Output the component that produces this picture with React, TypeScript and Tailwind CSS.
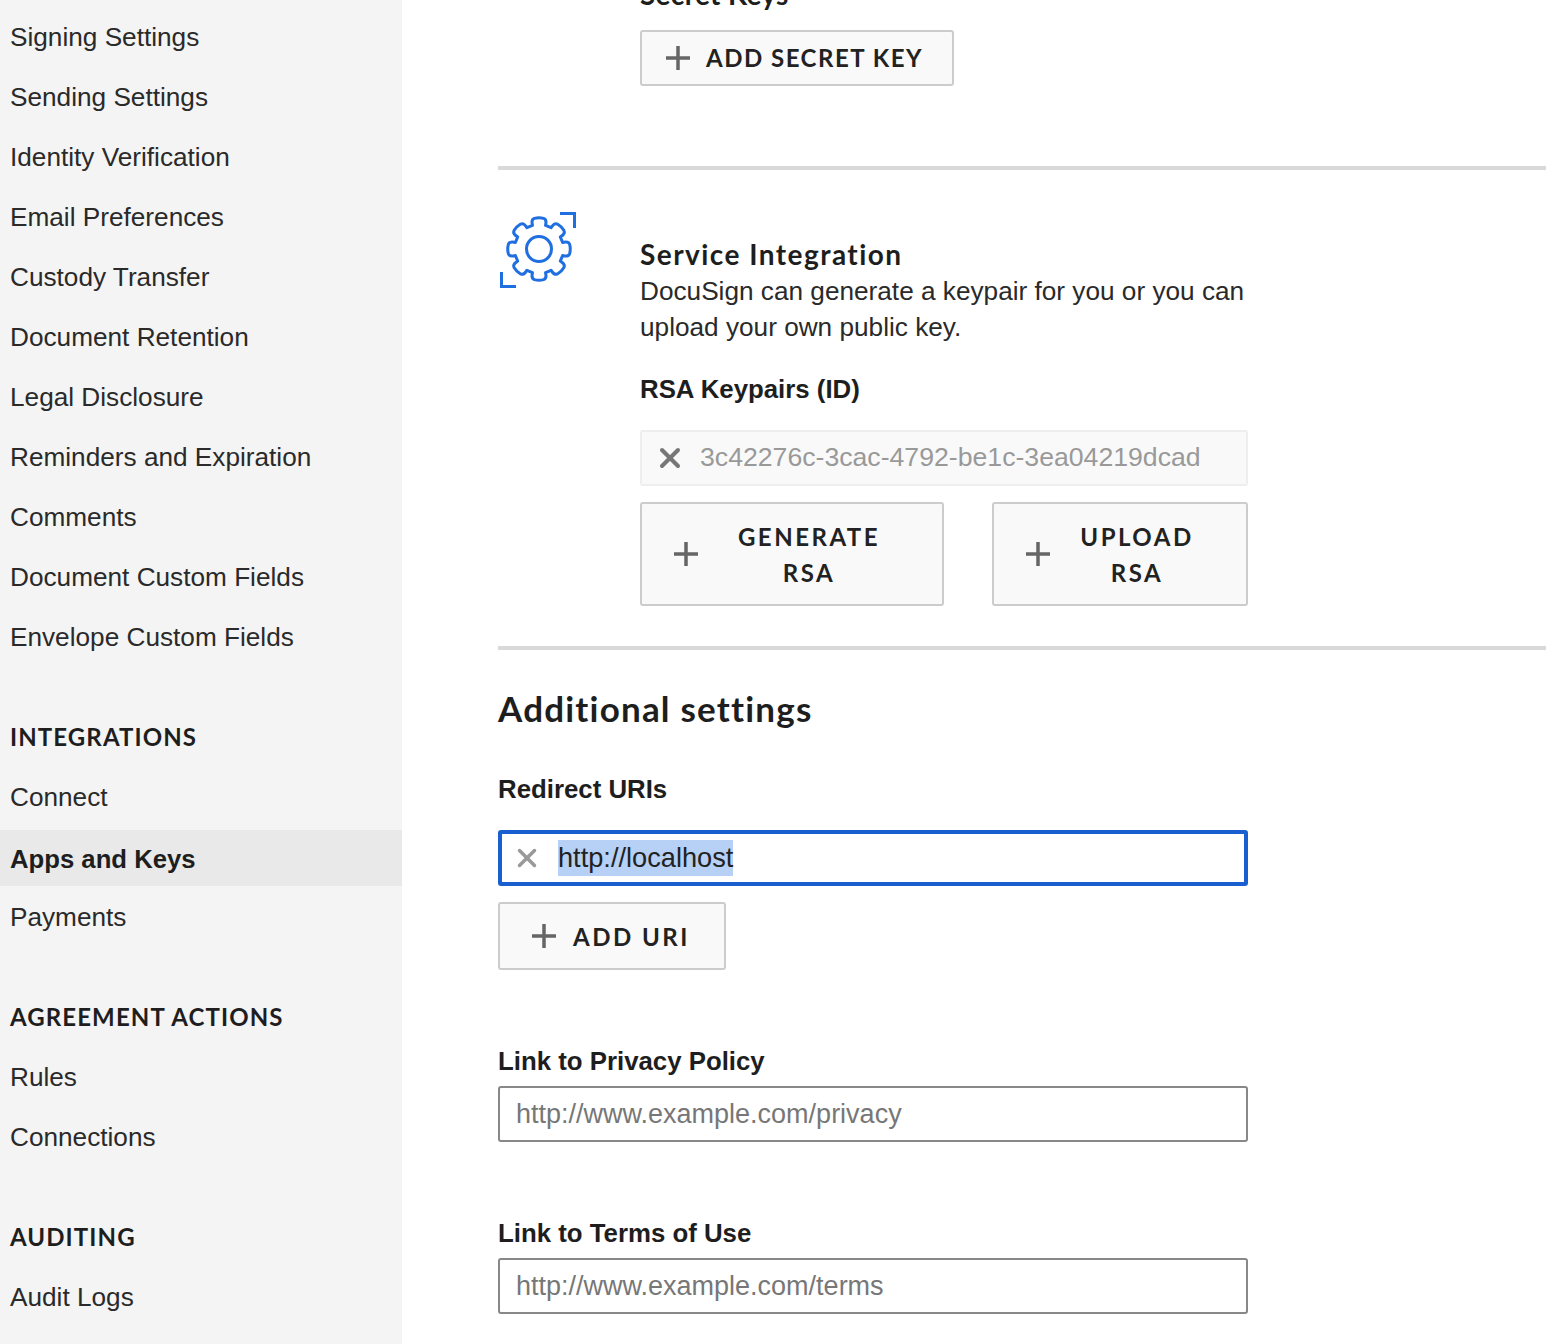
import {X} from "lucide-react";

const BODY = "font-['Liberation_Sans',Arial,sans-serif]";
const HEAD = "font-['Lato','Noto_Sans',sans-serif]";

const gearPath = () => {
    const cx = 39;
    const cy = 37;
    const pts: string[] = [];
    for (let i = 0; i < 8; i++) {
        const a = (i * Math.PI) / 4 - Math.PI / 2;
        const p = (r: number, d: number) => `${(cx + r * Math.cos(a + d)).toFixed(2)} ${(cy + r * Math.sin(a + d)).toFixed(2)}`;
        pts.push(`${i === 0 ? "M" : "L"}${p(24.5, -0.27)}`, `C${p(26, -0.26)} ${p(30.5, -0.28)} ${p(31, -0.15)}`, `C${p(31.5, -0.05)} ${p(31.5, 0.05)} ${p(31, 0.15)}`, `C${p(30.5, 0.28)} ${p(26, 0.26)} ${p(24.5, 0.27)}`);
    }
    return pts.join(" ") + " Z";
};

const GearIcon = () => (
    <svg width="76" height="76" viewBox="0 0 76 76" fill="none" stroke="#1f6fe0" strokeWidth="3" className="block">
        <path d={gearPath()} strokeLinejoin="round" />
        <circle cx="39" cy="37" r="12.5" />
        <path d="M60 1.500H74.500V16" />
        <path d="M1.500 60V74.500H16" />
    </svg>
);

const NavItem = ({label, active}: {label: string; active?: boolean}) =>
    active ? (
        <div className="mt-[2px] mb-[2px] flex h-[56px] items-center bg-[#e9e9e9] px-[10px] pt-[2px] text-[25.7px] font-bold text-[#1e1e1e]">{label}</div>
    ) : (
        <div className="flex h-[60px] items-center px-[10px]">{label}</div>
    );

const NavHeading = ({label}: {label: string}) => (
    <div className={`mt-[40px] flex h-[60px] items-center px-[10px] pb-[2px] text-[24px] font-bold tracking-[1.1px] text-[#1e1e1e] ${HEAD}`}>{label}</div>
);

const Sidebar = () => (
    <aside className={`w-[402px] shrink-0 bg-[#f4f4f4] pt-[8px] text-[26.2px] text-[#2a2a2a] ${BODY}`}>
        {["Signing Settings", "Sending Settings", "Identity Verification", "Email Preferences", "Custody Transfer", "Document Retention", "Legal Disclosure", "Reminders and Expiration", "Comments", "Document Custom Fields", "Envelope Custom Fields"].map(l => (
            <NavItem key={l} label={l} />
        ))}
        <NavHeading label="INTEGRATIONS" />
        <NavItem label="Connect" />
        <NavItem label="Apps and Keys" active />
        <NavItem label="Payments" />
        <NavHeading label="AGREEMENT ACTIONS" />
        <NavItem label="Rules" />
        <NavItem label="Connections" />
        <NavHeading label="AUDITING" />
        <NavItem label="Audit Logs" />
    </aside>
);

const Divider = () => <div className="h-[4px] bg-[#d9d9d9]" />;

const Label = ({children, className = ""}: {children: string; className?: string}) => (
    <div className={`text-[25.8px] leading-[36px] font-bold text-[#1e1e1e] ${BODY} ${className}`}>{children}</div>
);

const PlusGlyph = () => (
    <svg width="24" height="24" viewBox="0 0 24 24" className="block shrink-0" stroke="#666" strokeWidth="3.500">
        <path d="M12 0V24M0 12H24" />
    </svg>
);

const ButtonText = "text-[24px] font-bold tracking-[2.5px] text-[#222]";

const UrlInput = ({placeholder}: {placeholder: string}) => (
    <input
        readOnly
        placeholder={placeholder}
        className={`block h-[56px] w-[750px] rounded-[3px] border-2 border-[#888] bg-white px-[16px] text-[27px] outline-none placeholder:text-[#777] ${BODY}`}
    />
);

export default function App() {
    return (
        <div className="flex h-[1344px] w-[1546px] overflow-hidden bg-white">
            <Sidebar />
            <main className="min-w-0 flex-1 pl-[96px]">
                <div className="-mt-[24px] ml-[142px]">
                    <div className={`h-[36px] text-[28px] leading-[36px] font-bold tracking-[0.3px] text-[#1e1e1e] ${HEAD}`}>Secret Keys</div>
                    <button className={`mt-[18px] flex h-[56px] w-[314px] items-center rounded-[3px] border-2 border-[#ccc] bg-[#f9f9f9] pl-[24px] ${HEAD} ${ButtonText}`}>
                        <PlusGlyph />
                        <span className="ml-[16px] tracking-[1.5px]">ADD SECRET KEY</span>
                    </button>
                </div>

                <div className="mt-[80px]">
                    <Divider />
                </div>

                <section className="mt-[42px] flex">
                    <div className="w-[142px] shrink-0 pl-[2px]">
                        <GearIcon />
                    </div>
                    <div className="w-[608px]">
                        <div className={`mt-[24px] h-[36px] text-[28px] leading-[36px] font-bold tracking-[1.45px] text-[#1e1e1e] ${HEAD}`}>Service Integration</div>
                        <p className={`mt-px text-[26.2px] leading-[36px] text-[#2a2a2a] ${BODY}`}>DocuSign can generate a keypair for you or you can upload your own public key.</p>
                        <Label className="mt-[26px]">RSA Keypairs (ID)</Label>
                        <div className={`mt-[23px] flex h-[56px] items-center rounded-[3px] border-2 border-[#eee] bg-[#f9f9f9] pl-[12px] text-[26.65px] text-[#999] ${BODY}`}>
                            <X size={32} strokeWidth={4} absoluteStrokeWidth className="shrink-0 text-[#777]" />
                            <span className="ml-[14px]">3c42276c-3cac-4792-be1c-3ea04219dcad</span>
                        </div>
                        <div className="mt-[16px] flex justify-between">
                            <button className={`flex h-[104px] w-[304px] items-center rounded-[3px] border-2 border-[#ccc] bg-[#f9f9f9] pl-[32px] ${HEAD} ${ButtonText}`}>
                                <PlusGlyph />
                                <span className="mt-[2px] ml-[38px] w-[146px] text-center leading-[36px]">GENERATE RSA</span>
                            </button>
                            <button className={`flex h-[104px] w-[256px] items-center rounded-[3px] border-2 border-[#ccc] bg-[#f9f9f9] pl-[32px] ${HEAD} ${ButtonText}`}>
                                <PlusGlyph />
                                <span className="mt-[2px] ml-[29px] w-[116px] text-center leading-[36px]">UPLOAD RSA</span>
                            </button>
                        </div>
                    </div>
                </section>

                <div className="mt-[40px]">
                    <Divider />
                </div>

                <section className="w-[750px]">
                    <h2 className={`mt-[36px] h-[44px] text-[35px] leading-[44px] font-bold tracking-[1.2px] text-[#1e1e1e] ${HEAD}`}>Additional settings</h2>
                    <Label className="mt-[41px]">Redirect URIs</Label>
                    <div className={`mt-[23px] flex h-[56px] items-center rounded-[3px] border-4 border-[#1a5fd0] bg-white pl-[10px] text-[27.2px] text-[#222] ${BODY}`}>
                        <X size={30} strokeWidth={3.5} absoluteStrokeWidth className="shrink-0 text-[#999]" />
                        <span className="ml-[16px] bg-[#b6d0f6] leading-[36px]">http://localhost</span>
                    </div>
                    <button className={`mt-[16px] flex h-[68px] w-[228px] items-center rounded-[3px] border-2 border-[#ccc] bg-[#f9f9f9] pl-[32px] ${HEAD} ${ButtonText}`}>
                        <PlusGlyph />
                        <span className="mt-px ml-[17px]">ADD URI</span>
                    </button>
                    <Label className="mt-[73px]">Link to Privacy Policy</Label>
                    <div className="mt-[7px]">
                        <UrlInput placeholder="http://www.example.com/privacy" />
                    </div>
                    <Label className="mt-[73px]">Link to Terms of Use</Label>
                    <div className="mt-[7px]">
                        <UrlInput placeholder="http://www.example.com/terms" />
                    </div>
                </section>
            </main>
        </div>
    );
}
